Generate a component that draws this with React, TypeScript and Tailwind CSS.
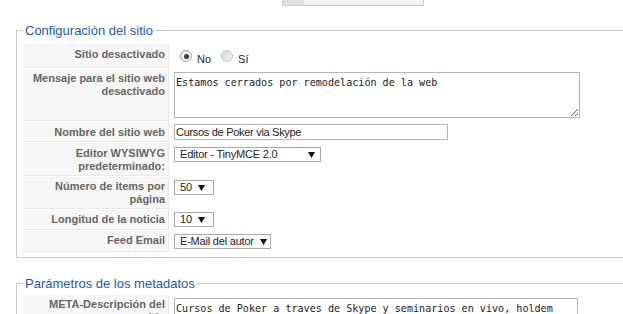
import React from "react";

const labelCls =
  "bg-[#f6f6f6] border-b border-r border-[#e9e9e9] text-right pr-[3px] font-bold text-[11px] leading-[13px] text-[#666666]";

const mono = "font-['DejaVu_Sans_Mono',monospace] text-[10.1px] text-[#222]";

function Arrow() {
  return (
    <svg width="7" height="6" viewBox="0 0 7 6" className="shrink-0">
      <polygon points="0,0 7,0 3.5,6" fill="#111" />
    </svg>
  );
}

function Select({ text, w, pr }: { text: string; w: string; pr: string }) {
  return (
    <div
      className={`${w} ${pr} h-[15px] border border-[#a9a9a9] bg-white flex items-center justify-between pl-[5px] text-[11px] text-[#222] tracking-[-0.2px]`}
    >
      <span>{text}</span>
      <Arrow />
    </div>
  );
}

function Radio({ checked, extra }: { checked?: boolean; extra?: string }) {
  return (
    <span
      className={
        checked
          ? `shrink-0 w-[12px] h-[12px] rounded-full border border-[#a3a3a3] bg-gradient-to-br from-[#e6e6e6] to-[#ffffff] flex items-center justify-center ${extra ?? ""}`
          : `shrink-0 block w-[12px] h-[12px] rounded-full border border-[#c4c4c4] bg-gradient-to-br from-[#d4d4d4] to-[#f6f6f6] ${extra ?? ""}`
      }
    >
      {checked && <span className="w-[5px] h-[5px] rounded-full bg-[#3c3c3c]" />}
    </span>
  );
}

export default function App() {
  return (
    <div className="w-[623px] h-[314px] overflow-hidden bg-white font-['Liberation_Sans',Arial,sans-serif]">
      <div className="ml-[282px] w-[142px] h-[6px] border-x border-b border-[#cfcfcf] bg-[#f3f3f3] flex">
        <div className="w-[21px] bg-[#dedede]" />
      </div>

      <fieldset className="ml-[16px] mt-[17px] w-[640px] border border-[#cccccc] pl-[6px] pt-[6px] pb-[5px]">
        <legend className="px-[2px] text-[13px] leading-[15px] text-[#2459a5]">
          Configuración del sitio
        </legend>
        <div className="flex flex-col gap-[1px]">
          {/* Row 1 */}
          <div className="grid grid-cols-[146px_1fr] gap-x-[1px] h-[24px]">
            <div className={`${labelCls} pt-[4px]`}>Sitio desactivado</div>
            <div className="flex items-center pl-[10px] text-[11px] text-[#222]">
              <Radio checked />
              <span className="ml-[5px] mt-[6px]">No</span>
              <Radio extra="ml-[10px]" />
              <span className="ml-[5px] mt-[6px]">Sí</span>
            </div>
          </div>
          {/* Row 2 */}
          <div className="grid grid-cols-[146px_1fr] gap-x-[1px]">
            <div className={`${labelCls} pt-[3px]`}>
              Mensaje para el sitio web
              <br />
              desactivado
            </div>
            <div className="pl-[4px] pt-[3px] pb-[3px]">
              <textarea
                readOnly
                defaultValue="Estamos cerrados por remodelación de la web"
                className={`block w-[406px] h-[46px] border border-[#b5b5b5] px-[1px] py-[2px] outline-none ${mono}`}
              />
            </div>
          </div>
          {/* Row 3 */}
          <div className="grid grid-cols-[146px_1fr] gap-x-[1px]">
            <div className={`${labelCls} pt-[4px]`}>Nombre del sitio web</div>
            <div className="pl-[4px] pt-[2px] pb-[2px]">
              <div className="w-[274px] h-[16px] border border-[#b5b5b5] bg-white flex items-center pl-[1px] text-[11px] text-[#222] tracking-[-0.3px]">
                Cursos de Poker via Skype
              </div>
            </div>
          </div>
          {/* Row 4 */}
          <div className="grid grid-cols-[146px_1fr] gap-x-[1px]">
            <div className={`${labelCls} pt-[4px] pb-[2px]`}>
              Editor WYSIWYG
              <br />
              predeterminado:
            </div>
            <div className="pl-[4px] pt-[4px]">
              <Select text="Editor - TinyMCE 2.0" w="w-[147px]" pr="pr-[5px]" />
            </div>
          </div>
          {/* Row 5 */}
          <div className="grid grid-cols-[146px_1fr] gap-x-[1px]">
            <div className={`${labelCls} pt-[3px] pb-[2px]`}>
              Número de items por
              <br />
              página
            </div>
            <div className="pl-[4px] pt-[3px]">
              <Select text="50" w="w-[40px]" pr="pr-[8px]" />
            </div>
          </div>
          {/* Row 6 */}
          <div className="grid grid-cols-[146px_1fr] gap-x-[1px] h-[20px]">
            <div className={`${labelCls} pt-[3px]`}>Longitud de la noticia</div>
            <div className="pl-[4px] pt-[2px]">
              <Select text="10" w="w-[40px]" pr="pr-[8px]" />
            </div>
          </div>
          {/* Row 7 */}
          <div className="grid grid-cols-[146px_1fr] gap-x-[1px] h-[21px]">
            <div className={`${labelCls} pt-[3px]`}>Feed Email</div>
            <div className="pl-[4px] pt-[3px]">
              <Select text="E-Mail del autor" w="w-[97px]" pr="pr-[3px]" />
            </div>
          </div>
        </div>
      </fieldset>

      <fieldset className="ml-[16px] mt-[18px] w-[640px] border border-[#cccccc] pl-[6px] pt-[4px] pb-[5px]">
        <legend className="px-[2px] text-[13px] leading-[15px] text-[#2459a5]">
          Parámetros de los metadatos
        </legend>
        <div className="flex flex-col gap-[1px]">
          <div className="grid grid-cols-[146px_1fr] gap-x-[1px]">
            <div className={`${labelCls} pt-[3px]`}>
              META-Descripción del
              <br />
              sitio
            </div>
            <div className="pl-[4px] pt-[3px] pb-[3px]">
              <textarea
                readOnly
                defaultValue="Cursos de Poker a traves de Skype y seminarios en vivo, holdem"
                className={`block w-[404px] h-[46px] border border-[#b5b5b5] px-[1px] py-[2px] outline-none ${mono}`}
              />
            </div>
          </div>
        </div>
      </fieldset>
    </div>
  );
}
